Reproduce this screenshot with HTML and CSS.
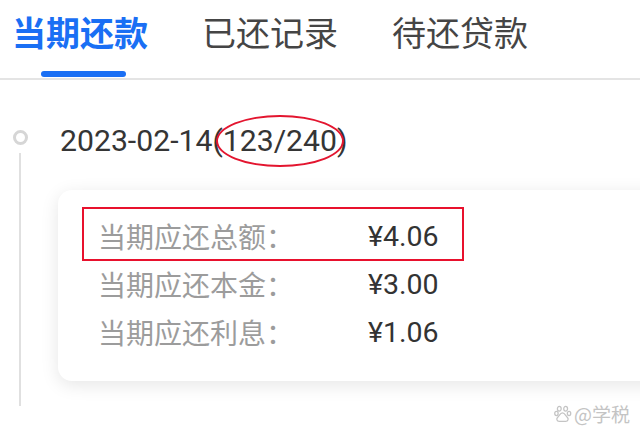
FILE: index.html
```html
<!DOCTYPE html>
<html lang="zh-CN">
<head>
<meta charset="utf-8">
<title>还款</title>
<link rel="stylesheet" href="styles.css">
</head>
<body>
<div class="tabs">
  <div class="tab active"><span class="tab-text">当期还款</span><i class="tab-bar"></i></div>
  <div class="tab"><span class="tab-text">已还记录</span></div>
  <div class="tab"><span class="tab-text">待还贷款</span></div>
</div>
<div class="timeline">
  <div class="rail"><span class="dot"></span><span class="line"></span></div>
  <div class="content">
    <div class="date">2023-02-14(<span class="mark">123/240</span>)</div>
    <div class="card">
      <div class="row hl"><span class="label">当期应还总额：</span><span class="value">¥4.06</span></div>
      <div class="row"><span class="label">当期应还本金：</span><span class="value">¥3.00</span></div>
      <div class="row"><span class="label">当期应还利息：</span><span class="value">¥1.06</span></div>
    </div>
  </div>
</div>
<div class="watermark">
  <svg class="paw" width="18" height="18" viewBox="0 0 17 17" fill="none" stroke="#c4c4c4" stroke-width="1.2">
    <ellipse cx="5" cy="3.5" rx="1.8" ry="2.2"/>
    <ellipse cx="11" cy="3.5" rx="1.8" ry="2.2"/>
    <ellipse cx="2.3" cy="8" rx="1.6" ry="2"/>
    <ellipse cx="14.2" cy="8" rx="1.6" ry="2"/>
    <path d="M8 7.5c-2 0-3 2.5-4.5 4s-1 4 1.5 4h6c2.5 0 3-2.5 1.5-4S10 7.5 8 7.5z"/>
  </svg>
  <span class="wm-text">@学税</span>
</div>
</body>
</html>
```
FILE: styles.css
```css
html, body {
  margin: 0;
  padding: 0;
  background: #ffffff;
  overflow: hidden;
}
body {
  width: 640px;
  height: 437px;
  position: relative;
  font-family: Roboto, "Noto Sans CJK SC", sans-serif;
  color: #333333;
}
.tabs {
  display: flex;
  gap: 54px;
  height: 78px;
  padding-left: 12px;
  border-bottom: 2px solid #e4e4e4;
  box-sizing: content-box;
}
.tab {
  display: flex;
  flex-direction: column;
  align-items: center;
  padding-top: 15px;
}
.tab-text {
  font-family: "Noto Sans CJK SC", sans-serif;
  font-size: 34px;
  line-height: 34px;
  color: #454545;
  white-space: nowrap;
}
.tab.active .tab-text {
  color: #1a6ff4;
  font-weight: 700;
}
.tab-bar {
  display: block;
  width: 85px;
  height: 6px;
  margin-top: 22px;
  margin-left: 7px;
  border-radius: 3px;
  background: #1a6ff4;
}
.timeline {
  display: flex;
}
.rail {
  width: 40px;
  display: flex;
  flex-direction: column;
  align-items: center;
  padding-top: 50px;
}
.dot {
  width: 15px;
  height: 15px;
  box-sizing: border-box;
  border: 3.5px solid #d6d6d6;
  border-radius: 50%;
}
.line {
  width: 2px;
  height: 253px;
  margin-top: 8px;
  background: #e0e0e0;
}
.content {
  flex: 1;
  padding-top: 43px;
}
.date {
  padding-left: 20px;
  font-size: 30.2px;
  line-height: 36px;
  color: #353535;
  white-space: nowrap;
}
.mark {
  position: relative;
}
.mark::after {
  content: "";
  position: absolute;
  left: -7px;
  right: -7px;
  top: -8px;
  bottom: -9px;
  border: 2.5px solid #e3152f;
  border-radius: 50%;
}
.card {
  margin-top: 31px;
  margin-left: 18px;
  margin-right: -40px;
  padding: 22px 0 25px 40px;
  background: #ffffff;
  border-radius: 14px;
  box-shadow: 0 4px 18px rgba(0, 0, 0, 0.1);
}
.row {
  position: relative;
  display: flex;
  align-items: center;
  height: 48px;
}
.label {
  width: 270px;
  font-family: "Noto Sans CJK SC", sans-serif;
  font-size: 28px;
  color: #9c9c9c;
  white-space: nowrap;
}
.value {
  font-size: 28.5px;
  color: #333333;
}
.row.hl::after {
  content: "";
  position: absolute;
  left: -16px;
  top: -5px;
  width: 382px;
  height: 54px;
  box-sizing: border-box;
  border: 2px solid #e8112d;
}
.watermark {
  position: absolute;
  right: 10px;
  bottom: 13px;
  display: flex;
  align-items: center;
  gap: 2px;
}
.wm-text {
  font-family: "Noto Sans CJK SC", sans-serif;
  font-size: 19px;
  line-height: 20px;
  color: #c4c4c4;
}
```
